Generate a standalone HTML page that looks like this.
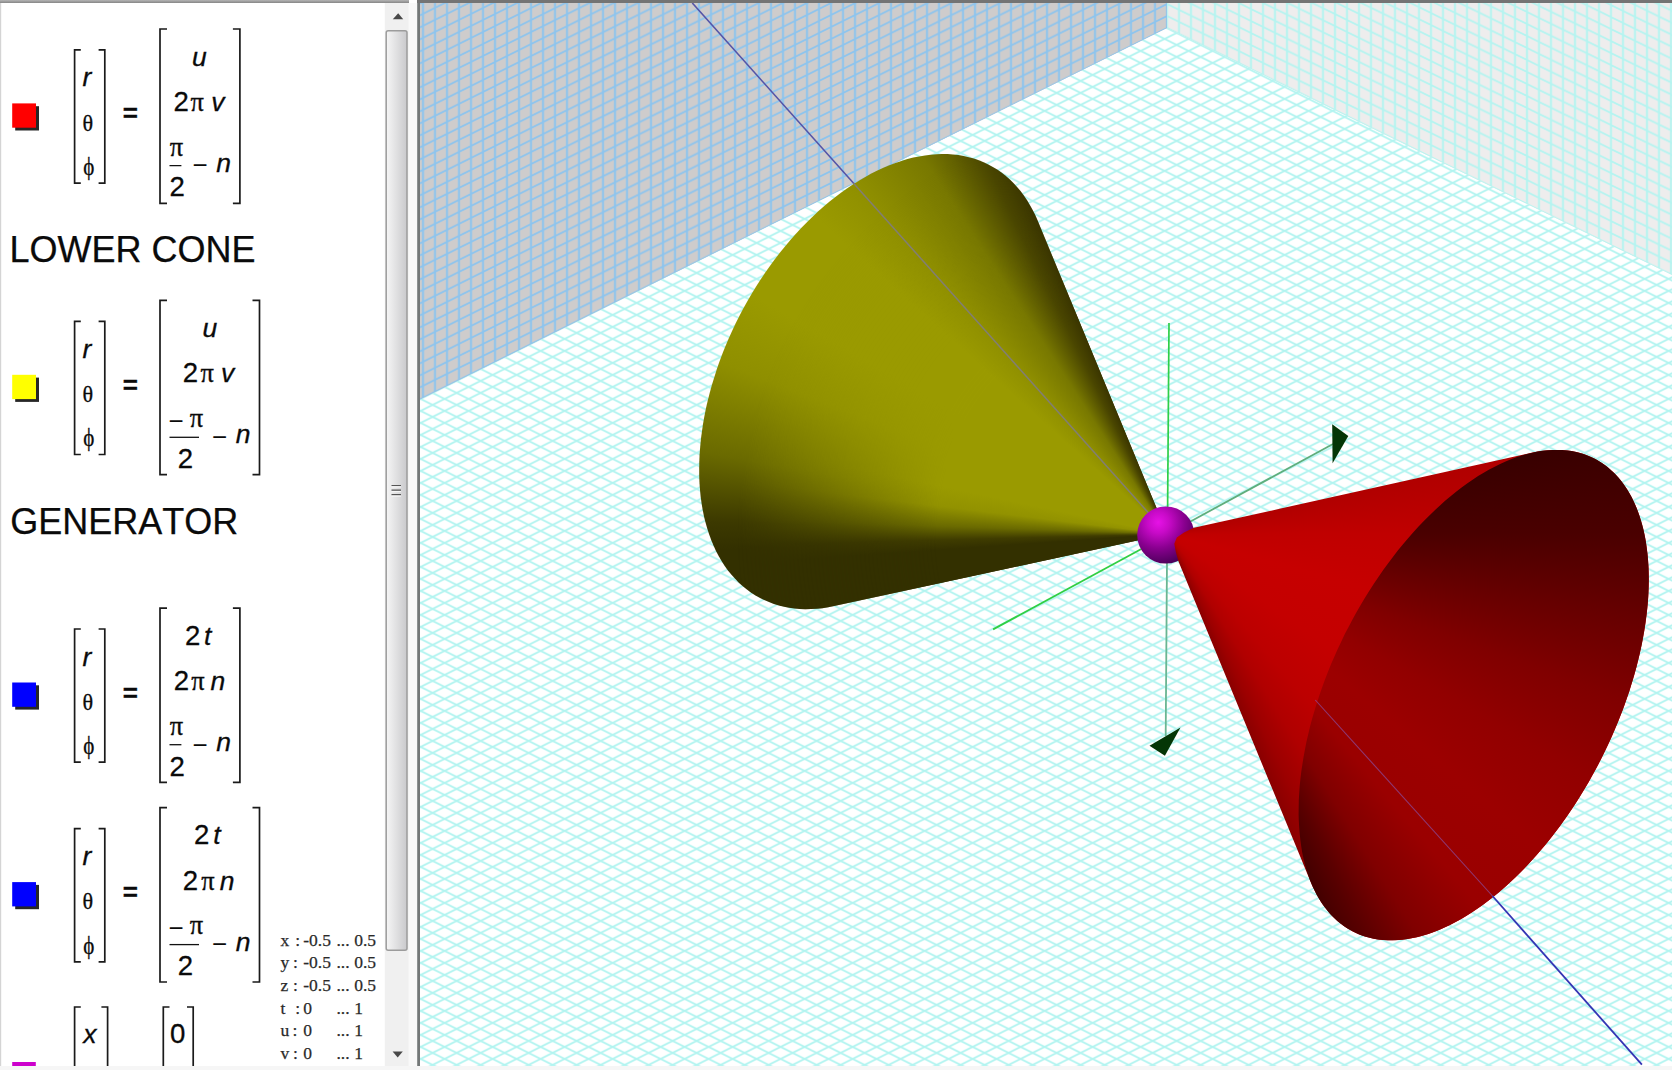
<!DOCTYPE html>
<html><head><meta charset="utf-8"><title>Cone</title>
<style>
html,body{margin:0;padding:0;background:#fff;}
body{width:1672px;height:1070px;position:relative;overflow:hidden;font-family:"Liberation Sans",sans-serif;}
.lay{position:absolute;left:0;top:0;width:1672px;height:1070px;}
.cone{}

.pn text{fill:#0a0a0a;stroke:#0a0a0a;stroke-width:0.3px;}
.pn text.hd{stroke-width:0.25px;}
.pn text.mn{stroke-width:0;}
.it{font:italic 26.5px "Liberation Sans",sans-serif;}
.dg{font:27.6px "Liberation Sans",sans-serif;}
.gr{font:26.5px "Liberation Serif",serif;}
.th{font:22.2px "Liberation Serif",serif;}
.ph{font:24.5px "Liberation Serif",serif;}
.eq{font:bold 26px "Liberation Sans",sans-serif;}
.mn{font:26px "Liberation Sans",sans-serif;}
.hd{font:36px "Liberation Sans",sans-serif;font-kerning:none;}
.pn text.rg{font:17.5px "Liberation Serif",serif;fill:#2a2a2a;stroke:#2a2a2a;stroke-width:0.25px;}

</style></head><body>
<svg class="lay" width="1672" height="1070" viewBox="0 0 1672 1070">
<defs>
<pattern id="pf" width="24" height="12" patternUnits="userSpaceOnUse" patternTransform="translate(1164.6 26.9)">
<path d="M-2 -1 L26 13 M-2 13 L26 -1" stroke="#b2f4f0" stroke-width="1.9" fill="none"/>
</pattern>
<pattern id="pl" width="24" height="12" patternUnits="userSpaceOnUse" patternTransform="matrix(1 0.003 0 1 1161.0 28.0)">
<path d="M-2 4 L8 -1 M4 13 L26 2" stroke="#8cc4ee" stroke-width="1.8" fill="none"/>
<path d="M6 -1 V13 M18 -1 V13" stroke="#8cc4ee" stroke-width="2" fill="none"/>
</pattern>
<pattern id="pr" width="24" height="12" patternUnits="userSpaceOnUse" patternTransform="matrix(1 -0.011 0 1 1161.0 28.0)">
<path d="M4 -1 L26 10 M-2 8 L8 13" stroke="#b4f4f0" stroke-width="1.8" fill="none"/>
<path d="M6 -1 V13 M18 -1 V13" stroke="#b4f4f0" stroke-width="2" fill="none"/>
</pattern>
<clipPath id="vp"><rect x="420" y="3" width="1252" height="1063"/></clipPath>
<radialGradient id="sph" cx="0.37" cy="0.28" r="0.75">
<stop offset="0" stop-color="#e612e6"/><stop offset="0.25" stop-color="#c80ac8"/><stop offset="0.6" stop-color="#8a0090"/><stop offset="1" stop-color="#4a0058"/>
</radialGradient>
</defs>
<g clip-path="url(#vp)">
<rect x="420" y="3" width="1252" height="1063" fill="#ffffff"/>
<rect x="420" y="3" width="1252" height="1063" fill="url(#pf)"/>
<path d="M420 3 H1167.0 V28.0 L420 399.4 Z" fill="#cecccc"/>
<path d="M420 3 H1167.0 V28.0 L420 399.4 Z" fill="url(#pl)"/>
<path d="M1167.0 3 H1672 V275 L1167.0 28.0 Z" fill="#eeeded"/>
<path d="M1167.0 3 H1672 V275 L1167.0 28.0 Z" fill="url(#pr)"/>
<line x1="692.3" y1="3" x2="868.6" y2="200" stroke="#5454a8" stroke-width="1.6"/>
<line x1="1169" y1="323" x2="1167.6" y2="510" stroke="#2fcf48" stroke-width="1.7"/>
<line x1="1167" y1="560" x2="1165.7" y2="736" stroke="#6ab692" stroke-width="1.8"/>
<line x1="993.1" y1="629.4" x2="1145" y2="547" stroke="#30cf44" stroke-width="1.8"/>
<line x1="1190" y1="521.7" x2="1333" y2="444" stroke="#5fae7c" stroke-width="1.8"/>
<path d="M1332.2 424.3 L1348.3 435.9 L1332.6 463.2 Z" fill="#043606"/>
<path d="M1149.5 745.7 L1180.5 727.4 L1164.9 755.8 Z" fill="#043606"/>
</g>
<rect x="417" y="0" width="3" height="1067" fill="#747878"/>
<rect x="417" y="0" width="1255" height="3" fill="#747474"/>
</svg>
<div class="lay cone" style="background:conic-gradient(from 180.0deg at 1167.3px 534.0px, #333000 70.0deg, #333000 88.0deg, #3c3900 91.5deg, #6a6a00 100.0deg, #8f8f00 111.0deg, #9a9a00 120.0deg, #9a9a00 132.0deg, #909000 138.0deg, #787800 147.0deg, #4a4600 154.0deg, #383300 158.0deg, #383300 165.0deg);clip-path:path('M1167.3 534.0 L834.1 606.1 L828.2 607.3 L822.4 608.2 L816.7 608.8 L811.0 609.1 L805.4 609.2 L799.9 609.0 L794.5 608.5 L789.2 607.8 L784.0 606.7 L778.9 605.5 L773.9 603.9 L769.0 602.1 L764.2 600.1 L759.6 597.8 L755.1 595.2 L750.8 592.4 L746.6 589.3 L742.5 586.0 L738.6 582.4 L734.9 578.6 L731.3 574.6 L727.9 570.4 L724.7 565.9 L721.7 561.2 L718.8 556.3 L716.1 551.2 L713.6 545.8 L711.3 540.3 L709.2 534.6 L707.3 528.8 L705.6 522.7 L704.0 516.5 L702.7 510.1 L701.6 503.6 L700.7 496.9 L700.0 490.1 L699.5 483.2 L699.2 476.1 L699.2 468.9 L699.3 461.7 L699.6 454.3 L700.2 446.8 L700.9 439.3 L701.9 431.7 L703.0 424.1 L704.4 416.3 L705.9 408.6 L707.7 400.8 L709.7 393.0 L711.8 385.2 L714.2 377.4 L716.7 369.6 L719.4 361.8 L722.3 354.0 L725.4 346.2 L728.7 338.5 L732.1 330.9 L735.7 323.3 L739.5 315.8 L743.4 308.3 L747.5 301.0 L751.7 293.7 L756.1 286.5 L760.6 279.5 L765.3 272.6 L770.1 265.8 L775.0 259.1 L780.0 252.6 L785.2 246.2 L790.4 240.0 L795.7 234.0 L801.2 228.1 L806.7 222.4 L812.3 216.9 L818.0 211.6 L823.7 206.5 L829.6 201.6 L835.4 197.0 L841.3 192.5 L847.3 188.3 L853.2 184.3 L859.3 180.5 L865.3 176.9 L871.3 173.6 L877.4 170.6 L883.4 167.8 L889.4 165.2 L895.4 162.9 L901.4 160.9 L907.4 159.1 L913.3 157.6 L919.1 156.4 L925.0 155.4 L930.7 154.7 L936.4 154.2 L942.0 154.0 L947.6 154.1 L953.0 154.5 L958.4 155.1 L963.7 156.0 L968.8 157.2 L973.9 158.6 L978.8 160.3 L983.6 162.2 L988.3 164.4 L992.8 166.9 L997.2 169.6 L1001.5 172.6 L1005.6 175.8 L1009.6 179.3 L1013.4 183.0 L1017.0 186.9 L1020.5 191.1 L1023.8 195.4 L1026.9 200.0 L1029.8 204.9 L1032.6 209.9 L1035.2 215.1 L1037.6 220.6 Z')"></div>
<div class="lay cone" style="background:conic-gradient(from 180.0deg at 1167.3px 534.0px, #333000 70.0deg, #333000 86.0deg, #3f3c00 88.5deg, #6a6a00 92.0deg, #929200 97.0deg, #9a9a00 102.0deg, #9a9a00 132.0deg, #909000 138.0deg, #787800 147.0deg, #4a4600 154.0deg, #383300 158.0deg, #383300 165.0deg);clip-path:path('M1167.3 534.0 L834.1 606.1 L828.2 607.3 L822.4 608.2 L816.7 608.8 L811.0 609.1 L805.4 609.2 L799.9 609.0 L794.5 608.5 L789.2 607.8 L784.0 606.7 L778.9 605.5 L773.9 603.9 L769.0 602.1 L764.2 600.1 L759.6 597.8 L755.1 595.2 L750.8 592.4 L746.6 589.3 L742.5 586.0 L738.6 582.4 L734.9 578.6 L731.3 574.6 L727.9 570.4 L724.7 565.9 L721.7 561.2 L718.8 556.3 L716.1 551.2 L713.6 545.8 L711.3 540.3 L709.2 534.6 L707.3 528.8 L705.6 522.7 L704.0 516.5 L702.7 510.1 L701.6 503.6 L700.7 496.9 L700.0 490.1 L699.5 483.2 L699.2 476.1 L699.2 468.9 L699.3 461.7 L699.6 454.3 L700.2 446.8 L700.9 439.3 L701.9 431.7 L703.0 424.1 L704.4 416.3 L705.9 408.6 L707.7 400.8 L709.7 393.0 L711.8 385.2 L714.2 377.4 L716.7 369.6 L719.4 361.8 L722.3 354.0 L725.4 346.2 L728.7 338.5 L732.1 330.9 L735.7 323.3 L739.5 315.8 L743.4 308.3 L747.5 301.0 L751.7 293.7 L756.1 286.5 L760.6 279.5 L765.3 272.6 L770.1 265.8 L775.0 259.1 L780.0 252.6 L785.2 246.2 L790.4 240.0 L795.7 234.0 L801.2 228.1 L806.7 222.4 L812.3 216.9 L818.0 211.6 L823.7 206.5 L829.6 201.6 L835.4 197.0 L841.3 192.5 L847.3 188.3 L853.2 184.3 L859.3 180.5 L865.3 176.9 L871.3 173.6 L877.4 170.6 L883.4 167.8 L889.4 165.2 L895.4 162.9 L901.4 160.9 L907.4 159.1 L913.3 157.6 L919.1 156.4 L925.0 155.4 L930.7 154.7 L936.4 154.2 L942.0 154.0 L947.6 154.1 L953.0 154.5 L958.4 155.1 L963.7 156.0 L968.8 157.2 L973.9 158.6 L978.8 160.3 L983.6 162.2 L988.3 164.4 L992.8 166.9 L997.2 169.6 L1001.5 172.6 L1005.6 175.8 L1009.6 179.3 L1013.4 183.0 L1017.0 186.9 L1020.5 191.1 L1023.8 195.4 L1026.9 200.0 L1029.8 204.9 L1032.6 209.9 L1035.2 215.1 L1037.6 220.6 Z');-webkit-mask-image:radial-gradient(circle at 1167.3px 534.0px, #000 0, #000 230px, transparent 430px);mask-image:radial-gradient(circle at 1167.3px 534.0px, #000 0, #000 230px, transparent 430px)"></div>
<svg class="lay" width="1672" height="1070" viewBox="0 0 1672 1070">
<line x1="853.3" y1="183" x2="1167.3" y2="534.0" stroke="#827e74" stroke-width="1.5"/>
<circle cx="1165.8" cy="535" r="28.6" fill="url(#sph)"/>
</svg>
<div class="lay cone" style="background:conic-gradient(from 0.0deg at 1167.3px 534.0px, #a80000 60.0deg, #b00000 77.0deg, #c00000 90.0deg, #c60000 105.0deg, #c40000 125.0deg, #bc0000 140.0deg, #b00000 148.0deg, #9c0000 154.0deg, #880000 158.0deg, #880000 180.0deg);clip-path:path('M1532.4 452.6 L1536.5 451.8 L1540.6 451.1 L1544.7 450.5 L1548.6 450.2 L1552.6 449.9 L1556.5 449.9 L1560.3 449.9 L1564.1 450.2 L1567.9 450.5 L1571.5 451.1 L1575.1 451.8 L1578.7 452.6 L1582.2 453.6 L1585.6 454.8 L1588.9 456.1 L1592.2 457.5 L1595.4 459.1 L1598.5 460.9 L1601.6 462.8 L1604.5 464.8 L1607.4 467.0 L1610.2 469.4 L1612.9 471.8 L1615.5 474.5 L1618.1 477.2 L1620.5 480.1 L1622.8 483.1 L1625.1 486.3 L1627.3 489.6 L1629.3 493.0 L1631.3 496.6 L1633.1 500.2 L1634.9 504.0 L1636.6 508.0 L1638.1 512.0 L1639.6 516.2 L1640.9 520.4 L1642.2 524.8 L1643.3 529.3 L1644.4 533.9 L1645.3 538.5 L1646.1 543.3 L1646.8 548.2 L1647.4 553.2 L1647.9 558.3 L1648.3 563.4 L1648.6 568.6 L1648.7 573.9 L1648.8 579.3 L1648.7 584.8 L1648.5 590.3 L1648.3 595.9 L1647.9 601.6 L1647.4 607.3 L1646.8 613.1 L1646.0 618.9 L1645.2 624.8 L1644.3 630.7 L1643.2 636.7 L1642.1 642.6 L1640.8 648.7 L1639.5 654.7 L1638.0 660.8 L1636.5 666.9 L1634.8 673.0 L1633.0 679.2 L1631.1 685.3 L1629.2 691.5 L1627.1 697.6 L1624.9 703.8 L1622.7 709.9 L1620.3 716.1 L1617.9 722.2 L1615.3 728.3 L1612.7 734.4 L1610.0 740.5 L1607.2 746.5 L1604.3 752.5 L1601.3 758.5 L1598.3 764.4 L1595.2 770.3 L1592.0 776.1 L1588.7 781.9 L1585.4 787.6 L1581.9 793.3 L1578.4 798.9 L1574.9 804.4 L1571.3 809.9 L1567.6 815.3 L1563.9 820.6 L1560.1 825.9 L1556.2 831.0 L1552.3 836.1 L1548.4 841.1 L1544.4 846.0 L1540.3 850.8 L1536.2 855.5 L1532.1 860.1 L1528.0 864.6 L1523.8 869.0 L1519.5 873.3 L1515.3 877.5 L1511.0 881.5 L1506.7 885.5 L1502.4 889.3 L1498.0 893.0 L1493.7 896.6 L1489.3 900.0 L1484.9 903.3 L1480.5 906.5 L1476.2 909.6 L1471.8 912.5 L1467.4 915.3 L1463.0 917.9 L1458.6 920.4 L1454.2 922.8 L1449.9 925.0 L1445.5 927.1 L1441.2 929.0 L1436.9 930.8 L1432.6 932.4 L1428.3 933.9 L1424.1 935.2 L1419.9 936.4 L1415.8 937.4 L1411.6 938.3 L1407.5 939.0 L1403.5 939.6 L1399.5 940.0 L1395.5 940.2 L1391.6 940.3 L1387.8 940.3 L1384.0 940.1 L1380.2 939.7 L1376.5 939.2 L1372.9 938.6 L1369.4 937.7 L1365.9 936.8 L1362.4 935.6 L1359.1 934.4 L1355.8 932.9 L1352.6 931.4 L1349.5 929.6 L1346.4 927.8 L1343.4 925.7 L1340.5 923.6 L1337.7 921.3 L1335.0 918.8 L1332.4 916.2 L1329.8 913.5 L1327.4 910.6 L1325.0 907.6 L1322.7 904.5 L1320.5 901.2 L1318.5 897.8 L1316.5 894.3 L1314.6 890.6 L1312.8 886.9 L1311.1 883.0 L1178.4 561.2 L1175.8 552.0 L1174.3 543.8 L1176.8 537.6 L1184.0 532.4 L1193.8 527.8 Z')"></div>
<div class="lay cone" style="background:conic-gradient(from 0.0deg at 1167.3px 534.0px, #380000 60.0deg, #380000 77.5deg, #4a0000 90.0deg, #660000 100.0deg, #800000 110.0deg, #920000 120.0deg, #9c0000 130.0deg, #9a0000 140.0deg, #800000 148.0deg, #580000 154.0deg, #400000 158.0deg, #400000 180.0deg);clip-path:path('M1600.7 759.8 L1596.8 767.2 L1592.8 774.6 L1588.7 781.9 L1584.5 789.1 L1580.1 796.2 L1575.7 803.2 L1571.2 810.1 L1566.5 816.9 L1561.8 823.5 L1557.0 830.1 L1552.1 836.4 L1547.1 842.7 L1542.0 848.8 L1536.9 854.8 L1531.7 860.6 L1526.5 866.2 L1521.2 871.7 L1515.8 876.9 L1510.4 882.1 L1505.0 887.0 L1499.6 891.7 L1494.1 896.2 L1488.6 900.6 L1483.1 904.7 L1477.6 908.6 L1472.0 912.3 L1466.5 915.8 L1461.0 919.1 L1455.5 922.1 L1450.0 924.9 L1444.5 927.5 L1439.1 929.9 L1433.7 932.0 L1428.3 933.9 L1423.0 935.5 L1417.8 936.9 L1412.5 938.1 L1407.4 939.0 L1402.3 939.7 L1397.3 940.1 L1392.4 940.3 L1387.5 940.3 L1382.7 940.0 L1378.1 939.5 L1373.5 938.7 L1369.0 937.6 L1364.6 936.4 L1360.4 934.9 L1356.2 933.1 L1352.2 931.1 L1348.2 928.9 L1344.5 926.5 L1340.8 923.8 L1337.3 920.9 L1333.9 917.7 L1330.6 914.4 L1327.5 910.8 L1324.5 907.0 L1321.7 903.0 L1319.0 898.8 L1316.5 894.4 L1314.2 889.8 L1312.0 885.0 L1309.9 880.0 L1308.1 874.8 L1306.4 869.4 L1304.8 863.9 L1303.4 858.2 L1302.2 852.4 L1301.2 846.3 L1300.4 840.2 L1299.7 833.8 L1299.2 827.4 L1298.8 820.8 L1298.6 814.1 L1298.7 807.3 L1298.8 800.3 L1299.2 793.3 L1299.7 786.1 L1300.4 778.9 L1301.3 771.6 L1302.4 764.2 L1303.6 756.7 L1305.0 749.2 L1306.5 741.6 L1308.3 734.0 L1310.1 726.3 L1312.2 718.6 L1314.4 710.9 L1316.8 703.2 L1319.3 695.5 L1322.0 687.7 L1324.8 680.0 L1327.8 672.3 L1330.9 664.6 L1334.2 656.9 L1337.6 649.3 L1341.2 641.7 L1344.8 634.1 L1348.7 626.7 L1352.6 619.3 L1356.6 612.0 L1360.8 604.7 L1365.1 597.6 L1369.5 590.5 L1374.0 583.6 L1378.6 576.7 L1383.2 570.0 L1388.0 563.4 L1392.9 556.9 L1397.8 550.6 L1402.8 544.4 L1407.9 538.4 L1413.1 532.5 L1418.3 526.8 L1423.6 521.2 L1428.9 515.9 L1434.3 510.7 L1439.7 505.7 L1445.1 500.8 L1450.6 496.2 L1456.1 491.8 L1461.6 487.6 L1467.1 483.5 L1472.6 479.7 L1478.1 476.1 L1483.7 472.8 L1489.2 469.6 L1494.7 466.7 L1500.1 464.0 L1505.6 461.5 L1511.0 459.2 L1516.4 457.2 L1521.7 455.5 L1527.0 453.9 L1532.3 452.7 L1537.4 451.6 L1542.6 450.8 L1547.6 450.2 L1552.6 449.9 L1557.5 449.9 L1562.3 450.0 L1567.0 450.4 L1571.6 451.1 L1576.2 452.0 L1580.6 453.2 L1584.9 454.5 L1589.1 456.2 L1593.2 458.0 L1597.2 460.1 L1601.1 462.5 L1604.8 465.0 L1608.4 467.8 L1611.9 470.9 L1615.2 474.1 L1618.4 477.6 L1621.4 481.3 L1624.3 485.2 L1627.0 489.3 L1629.6 493.6 L1632.1 498.1 L1634.3 502.8 L1636.5 507.7 L1638.4 512.8 L1640.2 518.1 L1641.8 523.5 L1643.3 529.1 L1644.6 534.9 L1645.7 540.8 L1646.6 546.9 L1647.4 553.2 L1648.0 559.6 L1648.4 566.1 L1648.7 572.7 L1648.8 579.5 L1648.7 586.4 L1648.4 593.4 L1648.0 600.5 L1647.3 607.7 L1646.5 614.9 L1645.6 622.3 L1644.4 629.7 L1643.1 637.2 L1641.7 644.8 L1640.0 652.4 L1638.2 660.0 L1636.2 667.7 L1634.1 675.4 L1631.8 683.1 L1629.4 690.9 L1626.8 698.6 L1624.0 706.4 L1621.1 714.1 L1618.0 721.8 L1614.8 729.5 L1611.5 737.1 L1608.0 744.7 L1604.4 752.3 L1600.7 759.8 Z')"></div>
<svg class="lay" width="1672" height="1070" viewBox="0 0 1672 1070">
<line x1="1315.3" y1="700" x2="1492.5" y2="896" stroke="#8a4a9a" stroke-width="1.1" opacity="0.75"/>
<line x1="1492.5" y1="896" x2="1641.9" y2="1064.7" stroke="#3434b4" stroke-width="1.8"/>
</svg>
<svg class="lay pn" width="1672" height="1070" viewBox="0 0 1672 1070">
<defs>
<clipPath id="pc"><rect x="0" y="3" width="384.6" height="1063"/></clipPath>
<linearGradient id="th" x1="0" x2="1" y1="0" y2="0"><stop offset="0" stop-color="#f6f6f6"/><stop offset="0.45" stop-color="#e2e2e3"/><stop offset="1" stop-color="#c9c9cc"/></linearGradient>
<linearGradient id="tb" x1="0" x2="0" y1="0" y2="1"><stop offset="0" stop-color="#b4b4b4"/><stop offset="1" stop-color="#868686"/></linearGradient>
</defs>
<rect x="0" y="0" width="409" height="3" fill="url(#tb)"/>
<rect x="0" y="3" width="1.2" height="1063" fill="#d4d4d4"/>
<rect x="0" y="1066" width="1672" height="4" fill="#f6f6f6"/>
<rect x="384.8" y="3" width="24" height="1063" fill="#f0f0f0"/>
<rect x="408.8" y="3" width="8.4" height="1063" fill="#f9f9f9"/>
<rect x="386.2" y="30.8" width="20.8" height="919.4" rx="2" fill="url(#th)" stroke="#9c9c9c" stroke-width="1.5"/>
<path d="M391.5 485.5 H401 M391.5 490.1 H401 M391.5 494.6 H401" stroke="#555" stroke-width="1.2"/>
<path d="M391.5 487 H401 M391.5 491.6 H401 M391.5 496.1 H401" stroke="#f8f8f8" stroke-width="1"/>
<path d="M392.8 19.3 L398.2 13.2 L403.2 19.3 Z" fill="#484848"/>
<path d="M392.6 1051.4 L402.8 1051.4 L397.7 1057.6 Z" fill="#484848"/>
<g clip-path="url(#pc)">
<rect x="15.2" y="106.2" width="23.8" height="24.3" fill="#262626"/><rect x="12.2" y="103.4" width="23.8" height="24.3" fill="#ff0000"/><rect x="15.2" y="377.6" width="23.8" height="24.3" fill="#262626"/><rect x="12.2" y="374.8" width="23.8" height="24.3" fill="#ffff00"/><rect x="15.2" y="685.3" width="23.8" height="24.3" fill="#262626"/><rect x="12.2" y="682.5" width="23.8" height="24.3" fill="#0000ff"/><rect x="15.2" y="884.9" width="23.8" height="24.3" fill="#262626"/><rect x="12.2" y="882.1" width="23.8" height="24.3" fill="#0000ff"/><rect x="12.2" y="1062" width="23.6" height="6" fill="#cc00cc"/>
<path d="M80.8 49.9 H74.6 V183.1 H80.8 M98.6 49.9 H104.8 V183.1 H98.6 M167.0 29.0 H160.0 V203.3 H167.0 M232.9 29.0 H239.9 V203.3 H232.9 M80.8 321.3 H74.6 V454.5 H80.8 M98.6 321.3 H104.8 V454.5 H98.6 M167.0 300.4 H160.0 V474.7 H167.0 M252.5 300.4 H259.5 V474.7 H252.5 M80.8 629.0 H74.6 V762.2 H80.8 M98.6 629.0 H104.8 V762.2 H98.6 M167.0 608.1 H160.0 V782.4 H167.0 M232.9 608.1 H239.9 V782.4 H232.9 M80.8 828.6 H74.6 V961.8 H80.8 M98.6 828.6 H104.8 V961.8 H98.6 M167.0 807.7 H160.0 V982.0 H167.0 M252.5 807.7 H259.5 V982.0 H252.5 M80.8 1007.0 H74.6 V1080.0 H80.8 M101.4 1007.0 H107.6 V1080.0 H101.4 M169.5 1007.0 H163.3 V1080.0 H169.5 M187.0 1007.0 H193.2 V1080.0 H187.0" fill="none" stroke="#1a1a1a" stroke-width="1.7"/>
<line x1="169.5" y1="165.6" x2="181.4" y2="165.6" stroke="#111" stroke-width="1.3"/><line x1="169.5" y1="437.3" x2="199.0" y2="437.3" stroke="#111" stroke-width="1.3"/><line x1="169.5" y1="744.7" x2="181.4" y2="744.7" stroke="#111" stroke-width="1.3"/><line x1="169.5" y1="944.6" x2="199.0" y2="944.6" stroke="#111" stroke-width="1.3"/>
<text class="it" x="82.44" y="86.4">r</text><text class="th" x="82.61" y="130.5">θ</text><text class="ph" transform="translate(83.37 174.9) scale(0.86 1)">ϕ</text><text class="eq" x="122.76" y="122.4">=</text><text class="it" x="191.94" y="65.9">u</text><text class="dg" x="173.42" y="110.8">2</text><text class="gr" x="190.54" y="110.8">π</text><text class="it" x="211.28" y="110.8">v</text><text class="gr" x="169.74" y="155.7">π</text><text class="dg" x="169.62" y="196.4">2</text><text class="mn" x="192.56" y="174.4">−</text><text class="it" x="216.34" y="172.3">n</text><text class="it" x="82.44" y="357.8">r</text><text class="th" x="82.61" y="401.9">θ</text><text class="ph" transform="translate(83.37 446.3) scale(0.86 1)">ϕ</text><text class="eq" x="122.76" y="393.8">=</text><text class="it" x="202.54" y="337.3">u</text><text class="dg" x="182.82" y="382.2">2</text><text class="gr" x="200.54" y="382.2">π</text><text class="it" x="220.97" y="382.2">v</text><text class="mn" x="168.46" y="429.5">−</text><text class="gr" x="189.74" y="426.9">π</text><text class="dg" x="177.82" y="467.5">2</text><text class="mn" x="212.06" y="446.1">−</text><text class="it" x="235.84" y="443.3">n</text><text class="it" x="82.44" y="665.5">r</text><text class="th" x="82.61" y="709.6">θ</text><text class="ph" transform="translate(83.37 754.0) scale(0.86 1)">ϕ</text><text class="eq" x="122.76" y="701.5">=</text><text class="dg" x="185.12" y="644.7">2</text><text class="it" x="203.94" y="644.7">t</text><text class="dg" x="173.82" y="689.9">2</text><text class="gr" x="191.34" y="689.9">π</text><text class="it" x="210.44" y="689.9">n</text><text class="gr" x="169.74" y="734.8">π</text><text class="dg" x="169.62" y="775.5">2</text><text class="mn" x="192.56" y="753.5">−</text><text class="it" x="216.34" y="751.4">n</text><text class="it" x="82.44" y="865.1">r</text><text class="th" x="82.61" y="909.2">θ</text><text class="ph" transform="translate(83.37 953.6) scale(0.86 1)">ϕ</text><text class="eq" x="122.76" y="901.1">=</text><text class="dg" x="194.02" y="844.3">2</text><text class="it" x="213.14" y="844.3">t</text><text class="dg" x="182.72" y="889.5">2</text><text class="gr" x="201.34" y="889.5">π</text><text class="it" x="219.63" y="889.5">n</text><text class="mn" x="168.46" y="936.8">−</text><text class="gr" x="189.74" y="934.2">π</text><text class="dg" x="177.82" y="974.8">2</text><text class="mn" x="212.06" y="953.4">−</text><text class="it" x="235.84" y="950.6">n</text><text class="it" x="83.36" y="1043.4">x</text><text class="dg" x="169.97" y="1043.4">0</text>
<text class="hd" x="9.6" y="262.2">LOWER CONE</text>
<text class="hd" x="10.3" y="533.6">GENERATOR</text>
<text class="rg" x="280.4" y="946">x</text><text class="rg" x="295.2" y="946">:</text><text class="rg" x="303.2" y="946">-0.5</text><text class="rg" x="336.4" y="946">...</text><text class="rg" x="354.2" y="946">0.5</text><text class="rg" x="280.4" y="968.4">y</text><text class="rg" x="293.0" y="968.4">:</text><text class="rg" x="303.2" y="968.4">-0.5</text><text class="rg" x="336.4" y="968.4">...</text><text class="rg" x="354.2" y="968.4">0.5</text><text class="rg" x="280.4" y="991.0">z</text><text class="rg" x="293.0" y="991.0">:</text><text class="rg" x="303.2" y="991.0">-0.5</text><text class="rg" x="336.4" y="991.0">...</text><text class="rg" x="354.2" y="991.0">0.5</text><text class="rg" x="280.4" y="1013.6">t</text><text class="rg" x="295.2" y="1013.6">:</text><text class="rg" x="303.2" y="1013.6">0</text><text class="rg" x="336.4" y="1013.6">...</text><text class="rg" x="354.2" y="1013.6">1</text><text class="rg" x="280.4" y="1036.1">u</text><text class="rg" x="292.6" y="1036.1">:</text><text class="rg" x="303.2" y="1036.1">0</text><text class="rg" x="336.4" y="1036.1">...</text><text class="rg" x="354.2" y="1036.1">1</text><text class="rg" x="280.4" y="1058.5">v</text><text class="rg" x="293.0" y="1058.5">:</text><text class="rg" x="303.2" y="1058.5">0</text><text class="rg" x="336.4" y="1058.5">...</text><text class="rg" x="354.2" y="1058.5">1</text>
</g>
</svg>
</body></html>
